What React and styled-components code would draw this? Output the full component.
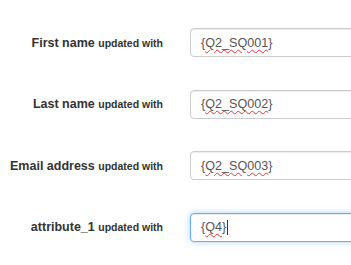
import styled, { createGlobalStyle } from 'styled-components';

const GlobalStyle = createGlobalStyle`
  html, body {
    margin: 0;
    padding: 0;
    background: #fff;
    overflow: hidden;
  }
  body {
    font-family: 'Liberation Sans', Arial, Helvetica, sans-serif;
    color: #333;
  }
`;

const Form = styled.div`
  width: 351px;
  height: 265px;
  overflow: hidden;
  padding-top: 28px;
  box-sizing: border-box;
  display: grid;
  grid-template-columns: 163px 200px;
  align-content: start;
  column-gap: 27px;
  row-gap: 32.5px;
  align-items: center;
`;

const Label = styled.label`
  text-align: right;
  white-space: nowrap;
  font-weight: bold;
  font-size: 12.5px;
  color: #333;

  & > small {
    font-size: 10.5px;
    font-weight: bold;
  }
`;

const Field = styled.div`
  height: 29px;
  box-sizing: border-box;
  display: flex;
  align-items: center;
  padding: 0 10px;
  font-size: 12.6px;
  color: #555;
  background: #fff;
  border: 1px solid ${(p) => (p.$focused ? '#66afe9' : '#ccc')};
  border-radius: 4px;
  box-shadow: ${(p) =>
    p.$focused
      ? 'inset 0 1px 1px rgba(0,0,0,.075), 0 0 6px rgba(102,175,233,.55)'
      : 'inset 0 1px 1px rgba(0,0,0,.075)'};
`;

const Misspelled = styled.span`
  text-decoration: underline wavy #e33;
  text-decoration-thickness: 1px;
  text-underline-offset: 2px;
`;

const Caret = styled.span`
  display: inline-block;
  width: 1px;
  height: 15px;
  margin-left: 1px;
  background: #333;
`;

const rows = [
  { name: 'First name', code: 'Q2_SQ001' },
  { name: 'Last name', code: 'Q2_SQ002' },
  { name: 'Email address', code: 'Q2_SQ003' },
  { name: 'attribute_1', code: 'Q4', focused: true },
];

export default function App() {
  return (
    <>
      <GlobalStyle />
      <Form>
        {rows.map((r) => [
          <Label key={r.name + '-l'}>
            {r.name} <small>updated with</small>
          </Label>,
          <Field key={r.name + '-f'} $focused={r.focused}>
            {'{'}
            <Misspelled>{r.code}</Misspelled>
            {'}'}
            {r.focused && <Caret />}
          </Field>,
        ])}
      </Form>
    </>
  );
}
